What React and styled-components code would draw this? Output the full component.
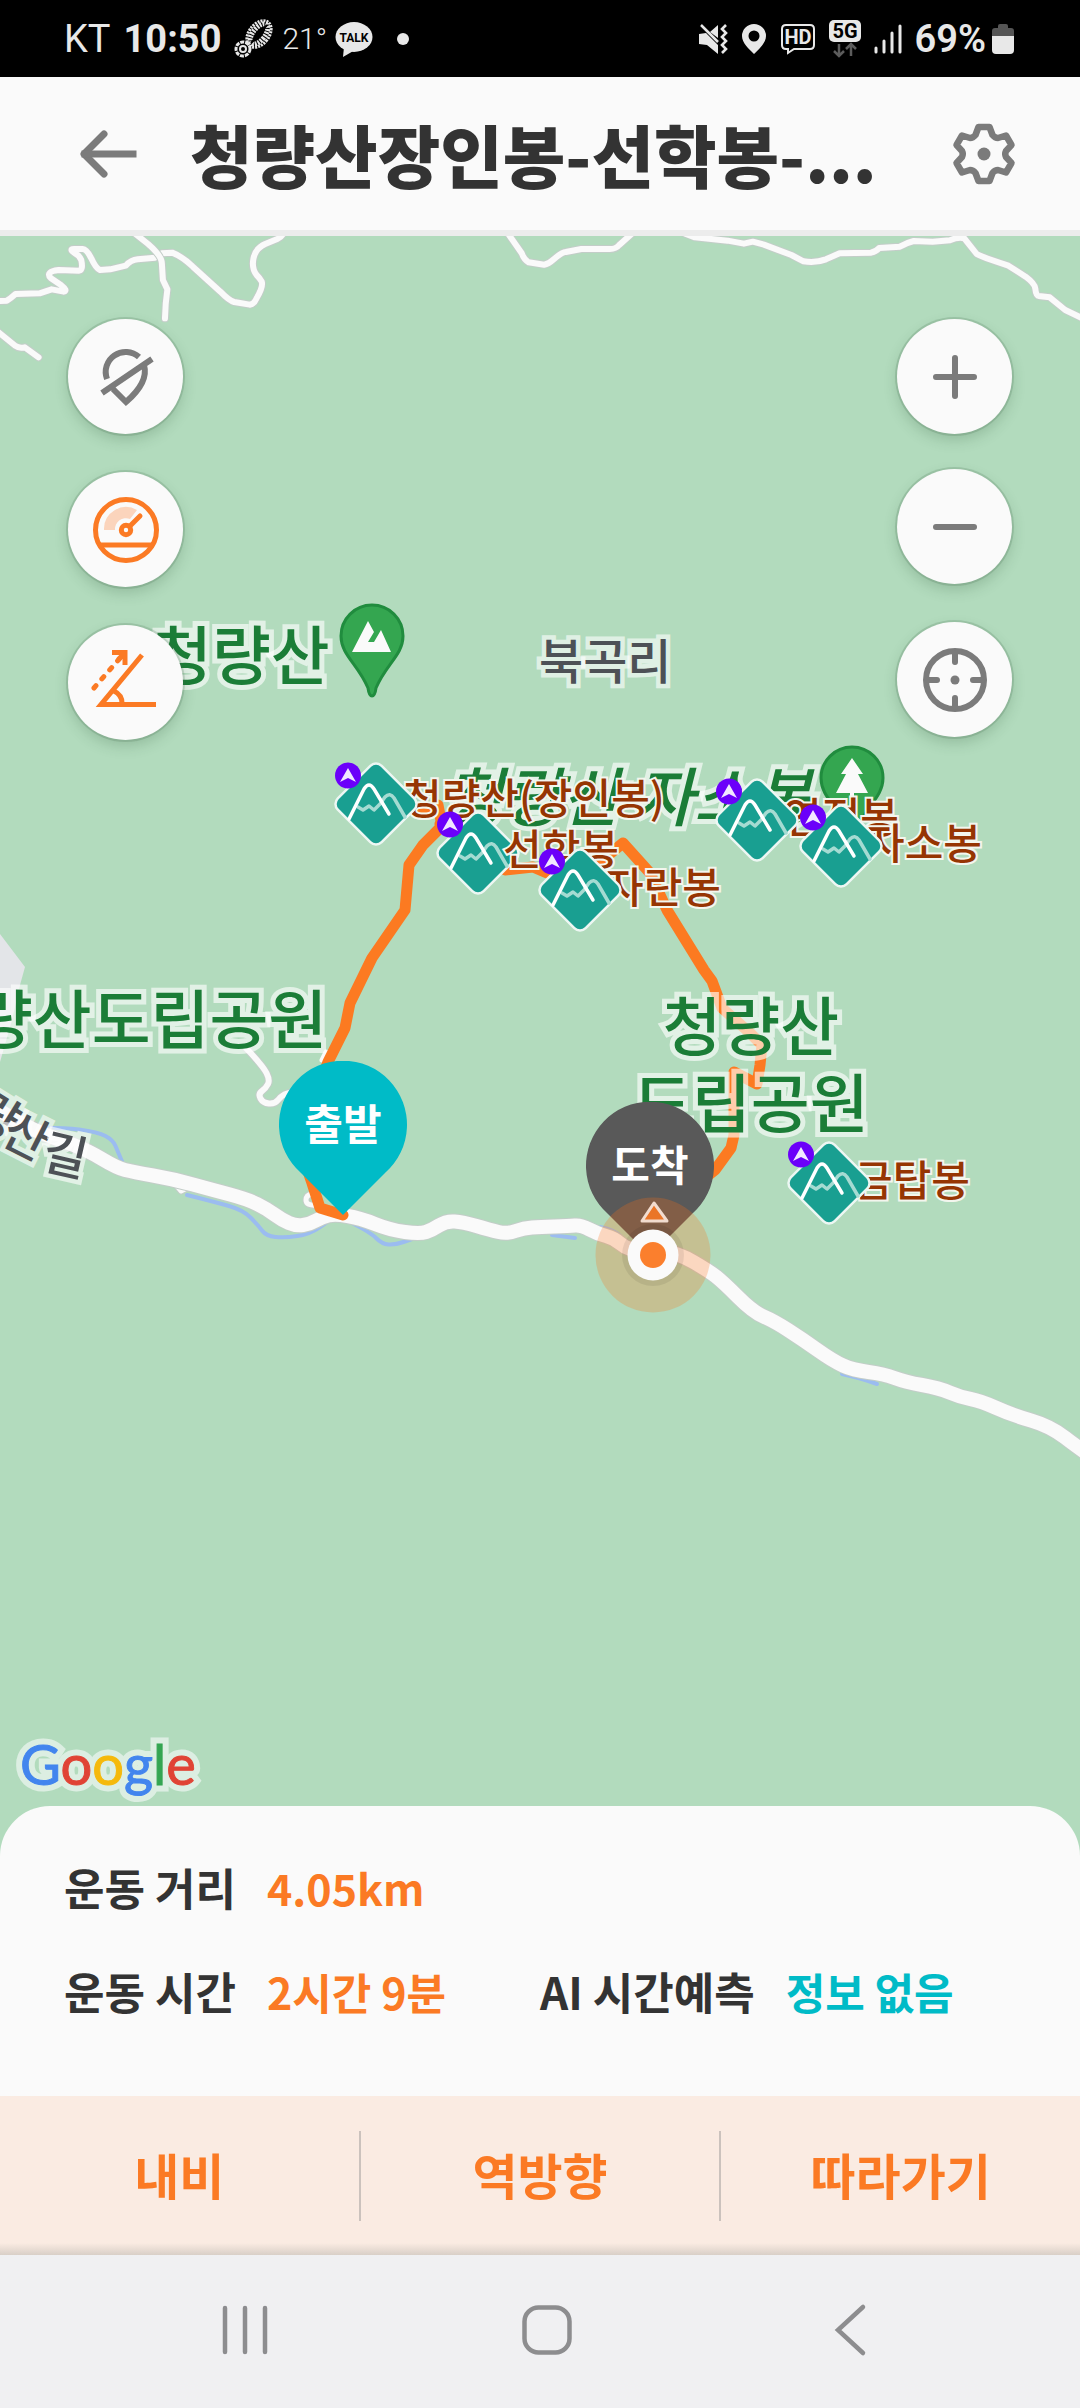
import React from "react";
import styled, { createGlobalStyle } from "styled-components";

const KR = '"Noto Sans CJK KR", "Noto Sans", sans-serif';
const ORANGE = "#fb7a24";
const GREY = "#7b7b7b";
const SURFACE = "#fafafa";

const GlobalStyle = createGlobalStyle`
  * { box-sizing: border-box; }
  body { margin: 0; background: ${SURFACE}; font-family: ${KR}; }
  button { border: 0; padding: 0; background: none; font: inherit; cursor: pointer; }
  h1, dl, dd { margin: 0; }
  svg { display: block; flex: none; }
`;

const Page = styled.div`
  display: flex;
  flex-direction: column;
  min-height: 100vh;
`;

/* ---------- status bar ---------- */

const StatusBar = styled.div`
  display: flex;
  align-items: center;
  justify-content: space-between;
  height: 77px;
  padding: 0 66px 0 64px;
  background: #000;
  color: #e8e8e8;
  font-family: Roboto, "Noto Sans", sans-serif;
  font-size: 38px;
  line-height: 48px;
`;

const StatusGroup = styled.div`
  display: flex;
  align-items: center;
  gap: ${(p) => p.$gap}px;
`;

const Clock = styled.span`
  font-weight: 700;
`;

const Temperature = styled.span`
  font-weight: 300;
  font-size: 30px;
`;

const Battery = styled.span`
  font-weight: 600;
`;

const BootIcon = () => (
  <svg width="40" height="40" viewBox="0 0 40 40" fill="none" stroke="#e8e8e8">
    <ellipse cx="25" cy="15" rx="10" ry="15" transform="rotate(38 25 15)" strokeWidth="3" strokeDasharray="2 1" />
    <ellipse cx="25" cy="15" rx="6" ry="12" transform="rotate(38 25 15)" strokeWidth="5" strokeDasharray="2 1" />
    <path d="M17 24 L33 6" strokeWidth="2" stroke="#000" />
    <circle cx="9" cy="30" r="7" strokeWidth="3" strokeDasharray="4 1" />
    <circle cx="9" cy="30" r="3" strokeWidth="2" />
  </svg>
);

const TalkIcon = () => (
  <svg width="38" height="38" viewBox="0 0 38 38">
    <ellipse cx="19" cy="17" rx="18.5" ry="15" fill="#e8e8e8" />
    <path d="M9 27 L8 37 L20 30 Z" fill="#e8e8e8" />
    <text x="19" y="22" textAnchor="middle" fontFamily="Roboto, sans-serif" fontWeight="700" fontSize="12" fill="#000">TALK</text>
  </svg>
);

const MuteIcon = () => (
  <svg width="30" height="32" viewBox="0 0 30 32">
    <path d="M1 11 L8 10 L20 22 L20 31 L9 22 L1 21 Z M20 2 L20 15 L12 9 Z" fill="#e8e8e8" />
    <path d="M3 2 L20 19" stroke="#e8e8e8" strokeWidth="2.5" />
    <path d="M28 2 L24 6 L28 10 L24 14 L28 18 L24 22 L28 26 L24 30" fill="none" stroke="#e8e8e8" strokeWidth="2.6" />
  </svg>
);

const PlaceIcon = () => (
  <svg width="26" height="32" viewBox="0 0 26 32">
    <path fillRule="evenodd" fill="#e8e8e8" d="M13 1 A12 12 0 0 1 25 13 C25 20 18 26 13 31 C8 26 1 20 1 13 A12 12 0 0 1 13 1 Z M13 7.500 A5.500 5.500 0 1 0 13 18.500 A5.500 5.500 0 1 0 13 7.500 Z" />
  </svg>
);

const HdIcon = () => (
  <svg width="36" height="32" viewBox="0 0 36 32">
    <path d="M6 2 H30 Q34 2 34 6 V22 Q34 26 30 26 H14 L8 30 V26 H6 Q2 26 2 22 V6 Q2 2 6 2 Z" fill="none" stroke="#e8e8e8" strokeWidth="2" />
    <text x="18" y="21" textAnchor="middle" fontFamily="Roboto, sans-serif" fontWeight="700" fontSize="20" fill="#e8e8e8">HD</text>
  </svg>
);

const FiveGIcon = () => (
  <svg width="32" height="38" viewBox="0 0 32 38">
    <rect width="32" height="22" rx="5" fill="#e8e8e8" />
    <text x="16" y="18" textAnchor="middle" fontFamily="Roboto, sans-serif" fontWeight="700" fontSize="20" fill="#000">5G</text>
    <path d="M10 24 V36 M5 31 L10 36 L15 31 M22 36 V24 M17 29 L22 24 L27 29" fill="none" stroke="#5c5c5c" strokeWidth="2.500" />
  </svg>
);

const SignalIcon = () => (
  <svg width="28" height="30" viewBox="0 0 28 30" stroke="#e8e8e8" strokeWidth="3" strokeLinecap="round">
    <path d="M2 24 V28 M10 17 V28 M18 9 V28 M26 2 V28" />
  </svg>
);

const BatteryIcon = () => (
  <svg width="22" height="30" viewBox="0 0 22 30">
    <path d="M0 12 V7 Q0 4 3 4 H6 V2 Q6 0 8 0 H14 Q16 0 16 2 V4 H19 Q22 4 22 7 V12 Z" fill="#555" />
    <path d="M0 12 H22 V26 Q22 30 18 30 H4 Q0 30 0 26 Z" fill="#e8e8e8" />
  </svg>
);

/* ---------- header ---------- */

const Header = styled.header`
  display: flex;
  align-items: center;
  height: 159px;
  padding: 0 64px 0 80px;
  background: ${SURFACE};
  border-bottom: 6px solid #ececec;
`;

const Title = styled.h1`
  flex: 1;
  min-width: 0;
  margin: 0 52px;
  overflow: hidden;
  white-space: nowrap;
  color: #333;
  font-size: 68px;
  line-height: 104px;
  font-weight: 900;
`;

const IconButton = styled.button`
  display: flex;
  align-items: center;
  justify-content: center;
`;

const BackArrow = () => (
  <svg width="58" height="50" viewBox="0 0 58 50" fill="none" stroke={GREY} strokeWidth="7" strokeLinecap="round" strokeLinejoin="round">
    <path d="M24 5 L4 25 L24 45" />
    <path d="M5 25 H53" strokeLinecap="square" />
  </svg>
);

const GearIcon = () => (
  <svg width="64" height="64" viewBox="-32 -32 64 64" fill="none" stroke={GREY} strokeWidth="6.500" strokeLinejoin="round">
    <path d="M-5.500 -27 H5.500 L8.500 -19 Q11 -16 14 -16 L22 -18.500 L27.500 -9 L22 -3 Q20.500 0 22 3 L27.500 9 L22 18.500 L14 16 Q11 16 8.500 19 L5.500 27 H-5.500 L-8.500 19 Q-11 16 -14 16 L-22 18.500 L-27.500 9 L-22 3 Q-20.500 0 -22 -3 L-27.500 -9 L-22 -18.500 L-14 -16 Q-11 -16 -8.500 -19 Z" />
    <circle r="6.500" fill={GREY} stroke="none" />
  </svg>
);

/* ---------- map ---------- */

const MapArea = styled.main`
  position: relative;
  display: flex;
  flex: 1;
  flex-direction: column;
  justify-content: space-between;
  min-height: 1200px;
  overflow: hidden;
  background: #b2dbbd;
`;

const Canvas = styled.div`
  position: absolute;
  top: 0;
  left: 50%;
  width: 1080px;
  margin-left: -540px;
`;

const Spot = styled.div`
  position: absolute;
  left: ${(p) => p.$x}px;
  top: ${(p) => p.$y}px;
`;

const labelLooks = {
  park: "color:#1b7d37;font-size:64px;line-height:77px;-webkit-text-stroke:10px rgba(255,255,255,.62);",
  town: "color:#4d5156;font-size:48px;line-height:56px;-webkit-text-stroke:9px rgba(255,255,255,.62);",
  peak: "color:#963503;font-size:42px;line-height:50px;-webkit-text-stroke:4px #f3f6ee;",
};

const Label = styled(Spot)`
  white-space: pre;
  text-align: center;
  font-weight: 500;
  font-style: ${(p) => (p.$italic ? "italic" : "normal")};
  paint-order: stroke fill;
  stroke-linejoin: round;
  ${(p) => labelLooks[p.$kind]}
`;

const RoadGlyph = styled(Label)`
  transform: rotate(${(p) => p.$turn}deg);
`;

const DropPin = styled(Spot)`
  width: 128px;
  height: 156px;
  padding-top: 33px;
  color: #fff;
  font-size: 42px;
  line-height: 56px;
  font-weight: 700;
  text-align: center;
`;

const DropShape = styled.svg`
  position: absolute;
  inset: 0;
`;

const DropText = styled.span`
  position: relative;
`;

/* Rounds a list of points into one soft line. */
function soften(points) {
  let d = `M${points[0][0]} ${points[0][1]}`;
  for (let i = 1; i < points.length - 1; i += 1) {
    const [x, y] = points[i];
    const [nx, ny] = points[i + 1];
    d += ` Q${x} ${y} ${(x + nx) / 2} ${(y + ny) / 2}`;
  }
  const last = points[points.length - 1];
  return `${d} L${last[0]} ${last[1]}`;
}

const mainRoad = soften([
  [-20, 1098], [-7, 1107], [33, 1130], [60, 1140], [87, 1150], [117, 1168], [133, 1172], [173, 1179], [213, 1190],
  [247, 1199], [267, 1209], [282, 1220], [296, 1226], [310, 1224], [322, 1217], [335, 1214], [360, 1218], [390, 1230],
  [420, 1234], [432, 1230], [446, 1221], [463, 1222], [490, 1230], [507, 1234], [524, 1228], [540, 1227], [569, 1226],
  [581, 1225], [598, 1234], [614, 1238], [628, 1250], [654, 1251], [678, 1253], [709, 1271], [723, 1282], [753, 1312],
  [774, 1321], [802, 1339], [833, 1361], [853, 1370], [884, 1374], [905, 1382], [939, 1388], [960, 1397], [981, 1401],
  [1012, 1415], [1050, 1426], [1080, 1449], [1100, 1462],
]);

const river = [
  [[30, 1128], [60, 1127], [98, 1132], [113, 1140], [118, 1152], [124, 1166]],
  [[187, 1195], [215, 1202], [243, 1210], [258, 1225], [266, 1236], [285, 1238], [310, 1234], [330, 1220]],
  [[350, 1222], [370, 1232], [382, 1244], [395, 1245], [412, 1239]],
  [[552, 1235], [575, 1238]],
  [[600, 1227], [615, 1230], [628, 1244]],
  [[842, 1374], [860, 1378], [877, 1384]],
].map(soften);

const lane = soften([[246, 1048], [263, 1066], [270, 1080], [266, 1088], [258, 1094], [263, 1103], [275, 1104], [282, 1095], [292, 1092]]);

const hillRoadsWest = [
  "M-5 213 L20 212 Q30 206 45 192 L115 190 L150 178 L185 185 Q198 182 178 166 L148 145 Q130 125 170 120 L230 122 Q242 120 236 90 Q230 75 215 68 Q200 57 215 57 L240 57 Q252 58 265 85 Q278 115 290 120 L320 118 L365 107 Q380 90 400 88 L450 83 L470 70 L500 68 Q530 80 560 110 L640 185 Q665 212 680 216 L725 224 Q738 222 745 205 Q765 170 760 155 Q755 145 745 135 Q730 115 736 85 Q742 55 770 42 L805 27 Q820 20 825 5",
  "M385 5 L430 42 Q470 78 470 100 L473 150 L486 178 Q480 220 479 265",
  "M-5 306 L45 348 Q55 356 72 352 L112 382",
];

const hillRoadsEast = [
  "M-100 0 L-53 70 Q-46 90 -33 97 L12 104 Q25 102 40 88 Q65 65 75 66 L120 57 L200 57 Q220 58 230 45 L270 8",
  "M420 10 L450 22 L545 32 L592 41 L618 35 L650 44 L730 75 L765 94 Q800 100 830 88 L870 70 L960 68 Q975 66 985 54 L1045 50 Q1065 38 1085 33 L1140 35 L1190 31 Q1215 20 1232 25 L1268 72 Q1280 80 1360 107 L1410 140 Q1436 160 1438 175 Q1440 198 1448 198 L1480 202 L1525 240 L1575 265",
];

const route = [
  "418,811 438,805 442,826 423,845 409,865 405,910 372,958 350,1003 345,1028 328,1062 310,1110 304,1160 312,1183 320,1208 343,1215",
  "440,824 463,838 505,870 533,867 547,873 600,862 623,843 650,873 667,910 704,970 712,981 722,1008 750,1033 762,1045 760,1065 757,1084 734,1072 734,1135 731,1148 715,1170 690,1190",
];

const Road = ({ d, width }) => (
  <>
    <path d={d} stroke="#c3cdc8" strokeWidth={width + 2} vectorEffect="non-scaling-stroke" />
    <path d={d} stroke={SURFACE} strokeWidth={width} vectorEffect="non-scaling-stroke" />
  </>
);

const Terrain = () => (
  <svg width="1080" height="1620" viewBox="0 236 1080 1620" fill="none" strokeLinecap="round" strokeLinejoin="round">
    <path d="M0 934 L25 967 L20 985 L12 1020 L0 1062 Z" fill="#e3e5e8" />
    {river.map((d) => <path key={d} d={d} stroke="#9bbcf0" strokeWidth="4" />)}
    <g transform="translate(0 230) scale(.3444 .3333)">
      {hillRoadsWest.map((d) => <Road key={d} d={d} width={6} />)}
    </g>
    <g transform="translate(540 230) scale(.3444 .3333)">
      {hillRoadsEast.map((d) => <Road key={d} d={d} width={6} />)}
    </g>
    <Road d={lane} width={6} />
    <Road d="M317 1205 Q306 1206 306 1200 Q306 1195 312 1194" width={5} />
    <Road d="M176 1185 L181 1191 L187 1188" width={5} />
    <path d="M322 1060 L326 1052" stroke={SURFACE} strokeWidth="5" />
    <Road d={mainRoad} width={14} />
    {route.map((p) => <polyline key={p} points={p} stroke="#fc7a21" strokeWidth="11" />)}
    <g fill="#34a650" stroke="#208c3e" strokeWidth="3">
      <path d="M372 605 A31 31 0 0 1 403 636 C403 655 386 664 376 688 Q375 696 372 696 Q369 696 368 688 C358 664 341 655 341 636 A31 31 0 0 1 372 605 Z" />
      <path d="M852 747 A31 31 0 0 1 883 778 C883 797 866 806 856 830 Q855 838 852 838 Q849 838 848 830 C838 806 821 797 821 778 A31 31 0 0 1 852 747 Z" />
    </g>
    <path d="M352 652 L368 621 L374 632 L368 642 H374 L381 630 L391 652 Z" fill={SURFACE} />
    <path d="M852 758 L863 774 H858 L868 793 H854 V797 H850 V793 H836 L846 774 H841 Z" fill={SURFACE} />
  </svg>
);

const PeakMarker = ({ x, y }) => (
  <Spot $x={x - 42} $y={y - 42}>
    <svg width="84" height="84" viewBox="-42 -42 84 84" fill="none" strokeLinecap="round" strokeLinejoin="round">
      <rect x="-31" y="-31" width="62" height="62" rx="8" transform="rotate(45)" fill="#199f91" stroke="#edf7f3" strokeWidth="2.500" />
      <path d="M-18 3 L-13 6 L-7 2 L-2 6 L4 0 L9 -7 Q14 -12 18 -6 L29 13" stroke="#a5dbd2" strokeWidth="3.500" />
      <path d="M-27 15 L-12 -15 Q-7 -23 -2 -15 L13 10" stroke="#fff" strokeWidth="3.500" />
      <circle cx="-28" cy="-28.500" r="13" fill="#6b00fa" />
      <path d="M-28 -36 L-20 -22 L-28 -26 L-36 -22 Z" fill="#f1e8ff" />
    </svg>
  </Spot>
);

const PeakLabel = ({ x, y, children }) => (
  <Label $kind="peak" $x={x} $y={y}>{children}</Label>
);

const Pin = ({ x, y, color, children }) => (
  <DropPin $x={x} $y={y}>
    <DropShape width="128" height="156" viewBox="0 0 128 156">
      <path d="M64 154 L22 112 A64 64 0 1 1 106 112 Z" fill={color} />
    </DropShape>
    <DropText>{children}</DropText>
  </DropPin>
);

const Here = () => (
  <Spot $x={595} $y={961}>
    <svg width="116" height="116" viewBox="-58 -58 116 116">
      <circle r="57.500" fill="#ff6e14" fillOpacity=".25" />
      <circle r="31" fill="#000" fillOpacity=".07" />
      <circle r="25.500" fill={SURFACE} />
      <circle r="13" fill="#fb7f2d" />
      <path d="M1 -52 L14 -34 H-11 Z" fill="#ea7527" stroke="#f2dccf" strokeWidth="3" strokeLinejoin="round" />
    </svg>
  </Spot>
);

const Controls = styled.div`
  position: relative;
  display: flex;
  justify-content: space-between;
  padding: 83px 68px 0;
`;

const ControlColumn = styled.div`
  display: flex;
  flex-direction: column;
  gap: 38px;
`;

const ZoomGroup = styled.div`
  display: flex;
  flex-direction: column;
  gap: 35px;
`;

const RoundButton = styled(IconButton)`
  width: 115px;
  height: 115px;
  border-radius: 50%;
  background: ${SURFACE};
  box-shadow: 0 0 0 2px rgba(70, 110, 80, 0.2), 0 6px 14px rgba(40, 80, 50, 0.22);
`;

const Glyph = ({ color = GREY, width = 6, children }) => (
  <svg width="70" height="70" viewBox="-35 -35 70 70" fill="none" stroke={color} strokeWidth={width}>
    {children}
  </svg>
);

const GoogleMark = styled.div`
  position: relative;
  align-self: flex-start;
  margin: 0 0 59px 20px;
  font-family: Lato, sans-serif;
  font-size: 56px;
  line-height: 66px;
  font-weight: 400;

  &::before {
    content: "Google";
    position: absolute;
    inset: 0;
    color: #dceee2;
    -webkit-text-stroke: 13px #dceee2;
  }
`;

const Tint = styled.span`
  position: relative;
  color: ${(p) => p.$color};
  -webkit-text-stroke: 1px ${(p) => p.$color};
`;

/* ---------- summary ---------- */

const Summary = styled.dl`
  position: relative;
  display: grid;
  grid-template-columns: 1fr 1fr;
  row-gap: 44px;
  margin-top: -50px;
  padding: 51px 0 75px;
  border-radius: 50px 50px 0 0;
  background: ${SURFACE};
  color: #333;
  font-size: 44px;
  line-height: 60px;
  font-weight: 700;
`;

const Stat = styled.div`
  display: flex;
  gap: 31px;
  grid-column: ${(p) => p.$column};
  padding-left: ${(p) => (p.$column === 1 ? 64 : 0)}px;
  white-space: nowrap;
`;

const StatValue = styled.dd`
  color: ${(p) => p.$color};
  font-size: 43px;
`;

const Actions = styled.div`
  display: flex;
  align-items: center;
  height: 159px;
  background: linear-gradient(to top, #d9cfc7, #faebe2 12px);
`;

const Action = styled.button`
  flex: 1;
  height: 90px;
  padding-bottom: 4px;
  color: ${ORANGE};
  font-size: 49px;
  line-height: 72px;
  font-weight: 700;

  & + & {
    border-left: 2px solid #cbc2bd;
  }
`;

const SystemNav = styled.nav`
  display: flex;
  height: 153px;
  padding: 0 79px 4px 94px;
  background: #f0f0f2;
`;

const NavButton = styled(IconButton)`
  flex: 1;
`;

const NavGlyph = ({ children }) => (
  <svg width="54" height="54" viewBox="-27 -27 54 54" fill="none" stroke="#8d8d8f" strokeWidth="4.500" strokeLinecap="round">
    {children}
  </svg>
);

export default function App() {
  return (
    <Page>
      <GlobalStyle />
      <StatusBar>
        <StatusGroup $gap={8}>
          <StatusGroup $gap={13}>
            <span>KT</span>
            <Clock>10:50</Clock>
            <BootIcon />
          </StatusGroup>
          <Temperature>21°</Temperature>
          <TalkIcon />
          <svg width="48" height="14" viewBox="0 0 48 14"><circle cx="22" cy="7" r="6" fill="#e8e8e8" /></svg>
        </StatusGroup>
        <StatusGroup $gap={13}>
          <MuteIcon />
          <PlaceIcon />
          <HdIcon />
          <FiveGIcon />
          <SignalIcon />
          <StatusGroup $gap={6}>
            <Battery>69%</Battery>
            <BatteryIcon />
          </StatusGroup>
        </StatusGroup>
      </StatusBar>

      <Header>
        <IconButton aria-label="뒤로"><BackArrow /></IconButton>
        <Title>청량산장인봉-선학봉-...</Title>
        <IconButton aria-label="설정"><GearIcon /></IconButton>
      </Header>

      <MapArea>
        <Canvas>
          <Terrain />
          <Label $kind="park" $x={153} $y={377}>청량산</Label>
          <Label $kind="town" $x={539} $y={394}>북곡리</Label>
          <Label $kind="park" $x={444} $y={519} $italic>청량산 자소봉</Label>
          <Label $kind="park" $x={-85} $y={741}>청량산도립공원</Label>
          <Label $kind="park" $x={633} $y={748}>{"청량산\n도립공원"}</Label>
          <RoadGlyph $kind="town" $x={-23} $y={848} $turn={32}>량</RoadGlyph>
          <RoadGlyph $kind="town" $x={6} $y={869} $turn={27}>산</RoadGlyph>
          <RoadGlyph $kind="town" $x={44} $y={888} $turn={13}>길</RoadGlyph>

          <PeakLabel x={403} y={535}>청량산(장인봉)</PeakLabel>
          <PeakMarker x={376} y={568} />
          <PeakMarker x={478} y={617} />
          <PeakLabel x={503} y={586}>선학봉</PeakLabel>
          <PeakLabel x={605} y={624}>자란봉</PeakLabel>
          <PeakMarker x={580} y={654} />
          <PeakLabel x={783} y={554}>연적봉</PeakLabel>
          <PeakMarker x={757} y={584} />
          <PeakLabel x={866} y={580}>자소봉</PeakLabel>
          <PeakMarker x={841} y={610} />
          <PeakLabel x={854} y={917}>금탑봉</PeakLabel>
          <PeakMarker x={829} y={947} />

          <Pin x={279} y={825} color="#00bbc7">출발</Pin>
          <Pin x={586} y={866} color="#595959">도착</Pin>
          <Here />
        </Canvas>

        <Controls>
          <ControlColumn>
            <RoundButton aria-label="위치 표시 끄기">
              <Glyph>
                <path d="M-19 2 A20 20 0 0 1 13 -20 M18 -12 Q23 5 0 25 L-13 12 M-24 16 L26 -18" />
              </Glyph>
            </RoundButton>
            <RoundButton aria-label="속도">
              <Glyph color={ORANGE} width={5}>
                <path d="M-22 0 A22 22 0 0 1 11 -20 L4 -11 A11 11 0 0 0 -11 0 Z" fill="#fbd4bc" stroke="none" />
                <circle r="30.500" />
                <circle r="4.700" />
                <path d="M4 -4 L14 -14" strokeLinecap="round" />
                <path d="M-26 15 H26" />
              </Glyph>
            </RoundButton>
            <RoundButton aria-label="경사도">
              <Glyph color={ORANGE} width={5}>
                <path d="M16 -28 L-25 21.500 H30" />
                <path d="M-12 8 Q-4 12 -4 20" />
                <path d="M-32 5 L-6 -25" strokeLinecap="round" strokeDasharray="3 9" />
                <path d="M-14 -30.500 H-1 V-18 M-1 -30.500 L-8 -23" />
              </Glyph>
            </RoundButton>
          </ControlColumn>
          <ControlColumn>
            <ZoomGroup>
              <RoundButton aria-label="확대">
                <Glyph><path d="M-19 0 H19 M0 -19 V19" strokeLinecap="round" /></Glyph>
              </RoundButton>
              <RoundButton aria-label="축소">
                <Glyph><path d="M-19 0 H19" strokeLinecap="round" /></Glyph>
              </RoundButton>
            </ZoomGroup>
            <RoundButton aria-label="현재 위치">
              <Glyph>
                <circle r="29" />
                <circle r="4.500" fill={GREY} stroke="none" />
                <path d="M0 -27 V-18 M0 27 V18 M-27 0 H-18 M27 0 H18" strokeLinecap="round" />
              </Glyph>
            </RoundButton>
          </ControlColumn>
        </Controls>

        <GoogleMark>
          <Tint $color="#4285ee">G</Tint>
          <Tint $color="#e04335">o</Tint>
          <Tint $color="#f5b90c">o</Tint>
          <Tint $color="#4285ee">g</Tint>
          <Tint $color="#34a552">l</Tint>
          <Tint $color="#e04335">e</Tint>
        </GoogleMark>
      </MapArea>

      <Summary>
        <Stat $column={1}>
          <dt>운동 거리</dt>
          <StatValue $color={ORANGE}>4.05km</StatValue>
        </Stat>
        <Stat $column={1}>
          <dt>운동 시간</dt>
          <StatValue $color={ORANGE}>2시간 9분</StatValue>
        </Stat>
        <Stat $column={2}>
          <dt>AI 시간예측</dt>
          <StatValue $color="#00bbc7">정보 없음</StatValue>
        </Stat>
      </Summary>

      <Actions>
        <Action>내비</Action>
        <Action>역방향</Action>
        <Action>따라가기</Action>
      </Actions>

      <SystemNav>
        <NavButton aria-label="최근 앱">
          <NavGlyph><path d="M-20 -22 V22 M0 -22 V22 M20 -22 V22" /></NavGlyph>
        </NavButton>
        <NavButton aria-label="홈">
          <NavGlyph><rect x="-22.500" y="-22.500" width="45" height="45" rx="14" /></NavGlyph>
        </NavButton>
        <NavButton aria-label="이전">
          <NavGlyph><path d="M13 -23 L-12 0 L13 23" /></NavGlyph>
        </NavButton>
      </SystemNav>
    </Page>
  );
}
